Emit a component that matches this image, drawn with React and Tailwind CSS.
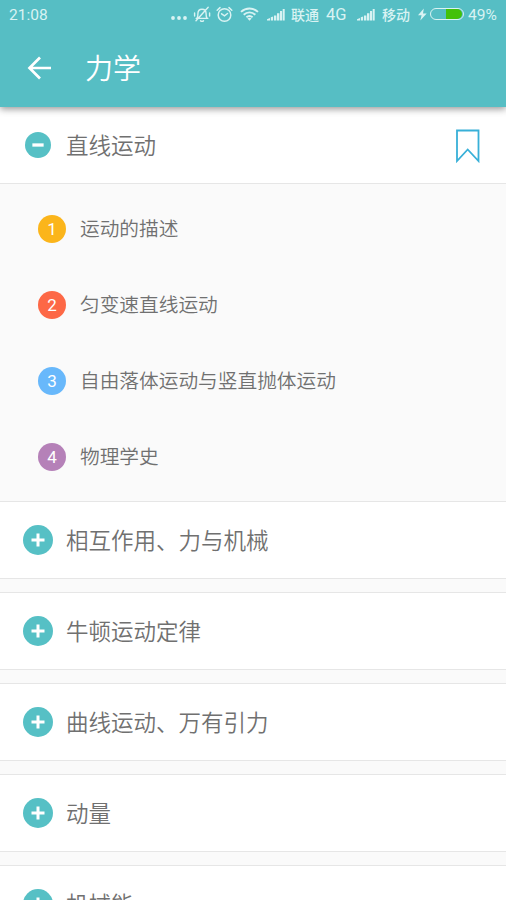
import React from 'react';

const lessons = [
    { id: 1, title: '运动的描述', color: 'bg-[#fbb51b]' },
    { id: 2, title: '匀变速直线运动', color: 'bg-[#fd6846]' },
    { id: 3, title: '自由落体运动与竖直抛体运动', color: 'bg-[#68b8fb]' },
    { id: 4, title: '物理学史', color: 'bg-[#b581b8]' },
];

const chapters = ['相互作用、力与机械', '牛顿运动定律', '曲线运动、万有引力', '动量', '机械能'];

const Signal = ({ className }) => (
    <svg className={className} width="18" height="13" viewBox="0 0 18 13" fill="currentColor">
        <path d="M0 12.5v-1.2l3-1.3v2.5zM3.8 9.3l2.3-.9v4.1H3.8zM7 7.5h2.4v5H7zM10 5.2h2.4v7.3H10zM13 3h2.1v9.5H13zM15.7 1h2v11.5h-2z"/>
    </svg>
);

const StatusBar = () => (
    <div className="h-[30px] pl-[9px] pr-[7px] flex items-center text-[#d9f3f3] text-[15.5px] leading-none whitespace-nowrap">
        <span className="mt-px">21:08</span>
        <div className="ml-auto flex items-center">
            <svg className="mt-[6px]" width="16" height="4" viewBox="0 0 16 4" fill="currentColor">
                <circle cx="2" cy="2" r="1.9"/>
                <circle cx="8" cy="2" r="1.9"/>
                <circle cx="14" cy="2" r="1.9"/>
            </svg>
            <svg className="ml-[6px] -mt-[2px]" width="18" height="17" viewBox="0 0 18 17" fill="none" stroke="currentColor" strokeWidth="1.4" strokeLinecap="round" strokeLinejoin="round">
                <path d="M3.2 12.4h11.6M4 12.2c.8-1 .9-2.600.9-4.500C4.900 5 6.400 3.200 9 3.200s4.100 1.800 4.100 4.500c0 1.900.1 3.500.9 4.500M7.500 14.800c.7.8 2.300.8 3 0M15.200 1.300 3 14.800M1.600 7v3M16.600 7v3"/>
            </svg>
            <svg className="ml-[5px] -mt-[2px]" width="17" height="17" viewBox="0 0 17 17" fill="none" stroke="currentColor" strokeWidth="1.5" strokeLinecap="round">
                <circle cx="8.5" cy="9" r="6.3"/>
                <path d="M5.6 7.8l2.9 2 3-2.3M1.2 4.2 4 1.6M15.800 4.200 13 1.600"/>
            </svg>
            <svg className="ml-[7px] -mt-[2px]" width="19" height="14" viewBox="0 0 19 14" fill="none" stroke="currentColor" strokeWidth="1.9">
                <path d="M1 4.900c4.900-4.500 12.100-4.500 17 0M3.700 7.700c3.400-3.100 8.200-3.100 11.600 0M6.400 10.300c1.900-1.600 4.300-1.600 6.200 0"/>
                <path d="M7.400 11.600c1.300-1 2.900-1 4.200 0l-2.100 2.200z" fill="currentColor" stroke="none"/>
            </svg>
            <Signal className="ml-[8px] -mt-[2px]"/>
            <span className="ml-[6px] text-[14px] font-medium">联通</span>
            <span className="ml-[7px] w-[23px] text-[16.5px] mt-px">4G</span>
            <Signal className="ml-[8px] -mt-[2px]"/>
            <span className="ml-[7px] text-[14px] font-medium">移动</span>
            <svg className="ml-[8px] -mt-[2px]" width="9" height="13" viewBox="0 0 9 13" fill="currentColor">
                <path d="M5.8.5 0 7.300h3.600L2.300 12.500 8.700 5.500H5z"/>
            </svg>
            <div className="ml-[3px] -mt-[2px] w-[34px] h-[12px] pr-px flex justify-end rounded-full border border-[#d9f3f3]">
                <div className="w-[16px] rounded-r-full bg-[#43c109]"/>
            </div>
            <span className="ml-[4px] w-[31px] text-[15.5px] mt-px">49%</span>
        </div>
    </div>
);

const Toggle = ({ open }) => (
    <span className="w-[30px] flex justify-center shrink-0">
        <svg width={open ? 26 : 30} height={open ? 26 : 30} viewBox="-15 -15 30 30">
            <circle r="15" fill="#56c0c5"/>
            <path d={open ? 'M-6.500 0H6.500' : 'M-6.500 0H6.500M0-6.500V6.500'} stroke="white" strokeWidth={open ? 3.8 : 3}/>
        </svg>
    </span>
);

const App = () => {
    return (
        <div className="h-[900px] w-full overflow-hidden bg-[#fafafa] text-[#707070] [font-weight:350] font-[Roboto,'Noto_Sans_CJK_SC',sans-serif]">
            <header className="relative h-[107px] bg-[#56bec4] font-normal shadow-[0_2px_7px_rgba(0,0,0,0.42)]">
                <StatusBar/>
                <div className="h-[76px] pl-[27px] flex items-center text-white">
                    <svg className="shrink-0" width="25" height="24" viewBox="0 0 25 24" fill="none" stroke="currentColor" strokeWidth="2.7">
                        <path d="M24 12H3M13 1.500 2.500 12 13 22.500"/>
                    </svg>
                    <h1 className="ml-[33px] pt-[3px] text-[28px] leading-none [font-weight:350]">力学</h1>
                </div>
            </header>

            <section>
                <div className="h-[77px] pl-[23px] pr-[26px] flex items-center bg-white border-b border-[#e6e6e6]">
                    <Toggle open/>
                    <h2 className="ml-[13px] pt-[2px] text-[22.5px] leading-none [font-weight:350]">直线运动</h2>
                    <svg className="ml-auto mt-[2px]" width="25" height="34" viewBox="0 0 25 34" fill="none" stroke="#38b0d8" strokeWidth="1.8">
                        <path d="M2 1.500h21.500V32L12.700 20.500 2 32z"/>
                    </svg>
                </div>
                <ul className="pt-[7px] pb-[6px]">
                    {lessons.map(({ id, title, color }) => (
                        <li key={id} className="h-[76px] pl-[38px] flex items-center">
                            <span className={`w-[28px] h-[28px] rounded-full flex items-center justify-center text-white text-[17px] leading-none font-normal pt-px ${color}`}>
                                {id}
                            </span>
                            <span className="ml-[14px] pt-[2px] text-[19.7px] leading-none">{title}</span>
                        </li>
                    ))}
                </ul>
            </section>

            <div className="flex flex-col gap-[13px]">
                {chapters.map((name) => (
                    <div key={name} className="h-[78px] pl-[23px] flex items-center shrink-0 bg-white border-y border-[#e6e6e6]">
                        <Toggle/>
                        <h2 className="ml-[13px] pt-[2px] text-[22.5px] leading-none [font-weight:350]">{name}</h2>
                    </div>
                ))}
            </div>
        </div>
    );
};

export default App;
